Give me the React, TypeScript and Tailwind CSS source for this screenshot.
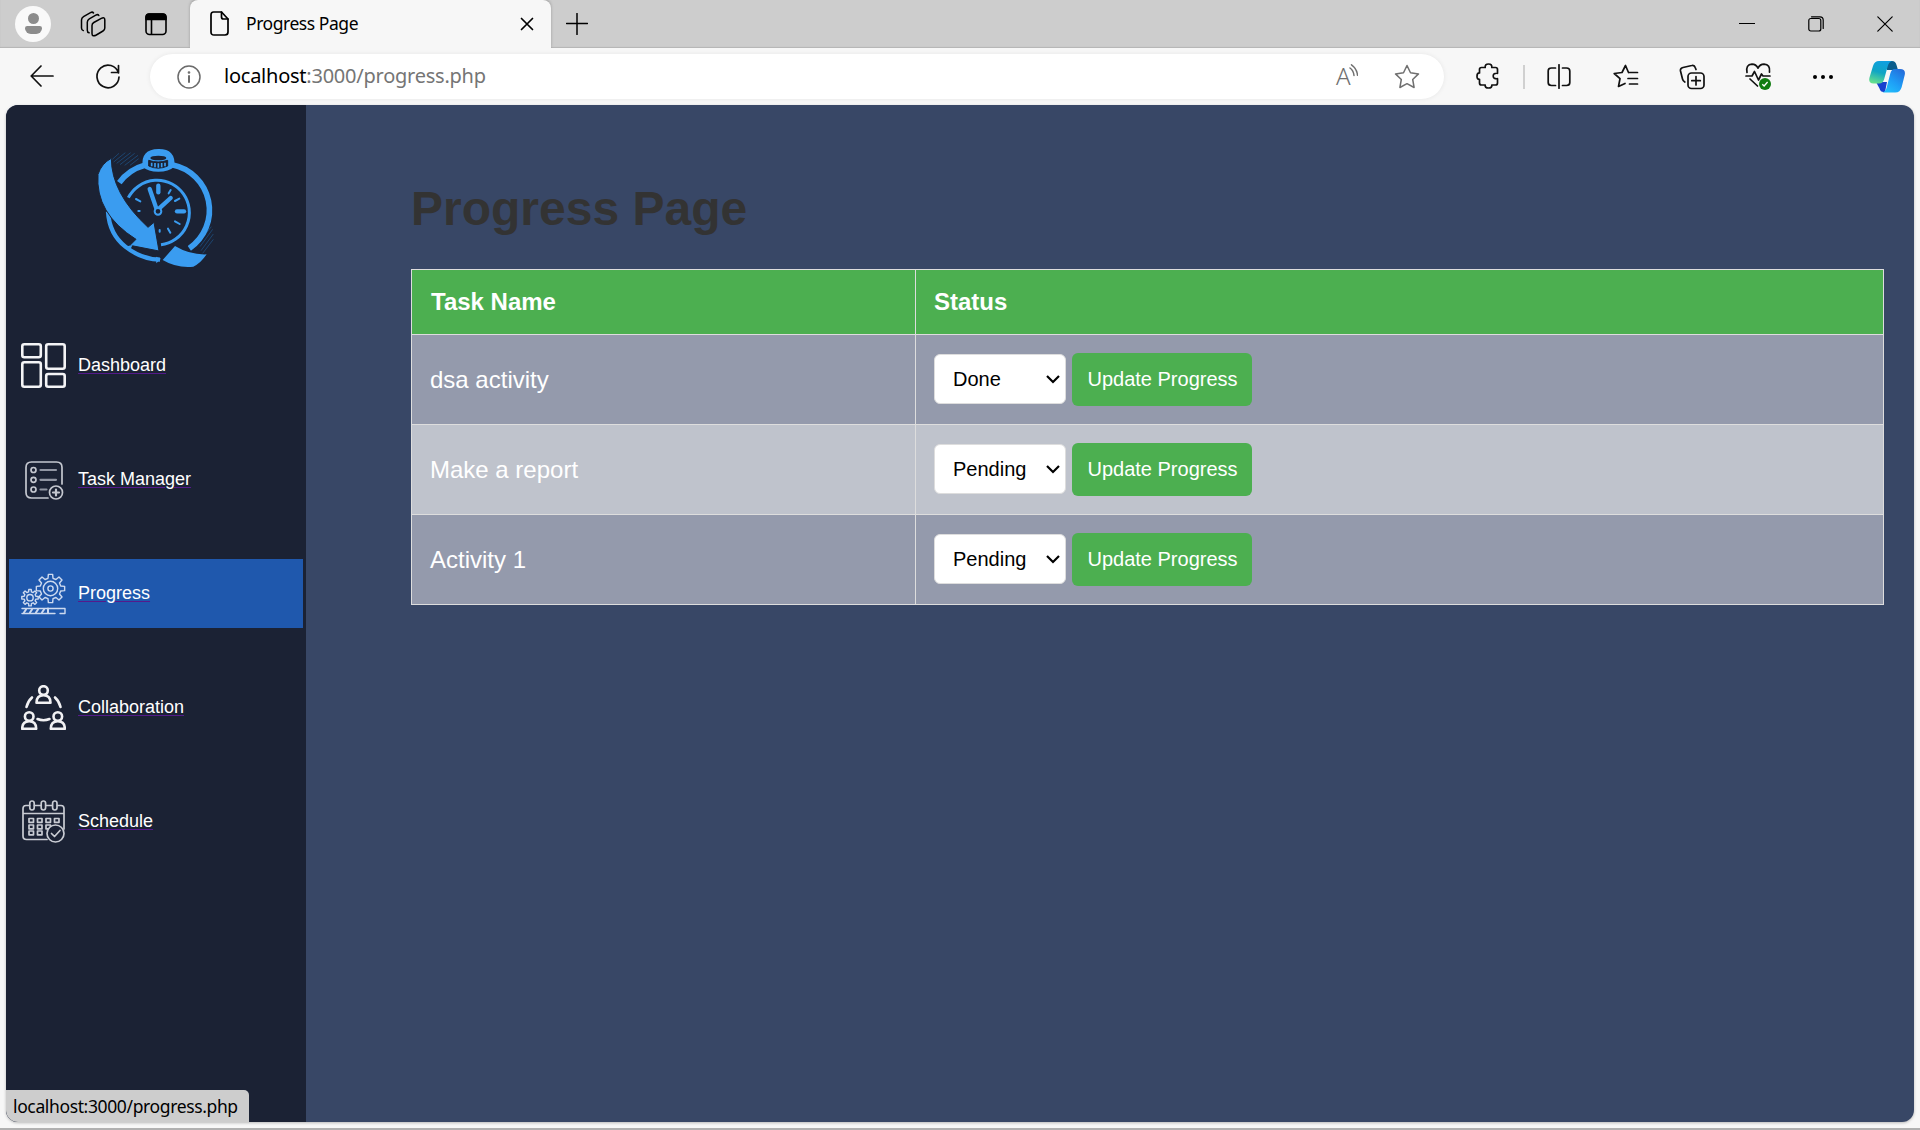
import React from "react";

type IconProps = { className?: string };

const Line = ({
  w,
  h,
  sw = 1.5,
  className = "",
  children,
}: {
  w: number;
  h: number;
  sw?: number;
  className?: string;
  children: React.ReactNode;
}) => (
  <svg
    width={w}
    height={h}
    viewBox={`0 0 ${w} ${h}`}
    fill="none"
    stroke="currentColor"
    strokeWidth={sw}
    strokeLinecap="round"
    strokeLinejoin="round"
    className={`block shrink-0 ${className}`}
  >
    {children}
  </svg>
);

/* ---------- browser chrome ---------- */

function TitleBar() {
  return (
    <div className="flex h-12 shrink-0 bg-[#cdcdcd] text-black shadow-[inset_0_-1px_1px_rgba(0,0,0,0.12)]">
      <div className="flex w-[190px] shrink-0 items-center pl-[15px]">
        <div className="flex h-9 w-9 flex-col items-center rounded-full bg-[#f9f9f9] pt-[7px]">
          <div className="h-[11px] w-[11px] rounded-full bg-[#8c8c8c]" />
          <div className="mt-[2px] h-[8px] w-[17px] rounded-t-[3px] rounded-b-[8px] bg-[#8c8c8c]" />
        </div>
        <Line w={26} h={26} className="ml-[29px]">
          <path d="M13.800 11.500l7.500-4.200q3.500-1.800 3.500 1.700v8q0 2-1.800 3l-6.700 4q-4.300 2.300-4.300-1.500v-8q0-2 1.800-3z" />
          <path d="M18.800 4.500q-.800-1.500-3-.400l-6.500 3.700q-2 1.200-2 3.400v8q0 2.300 1.800 2.600" />
          <path d="M13.500 2q-1-1.500-3-.400l-7 4q-2 1.200-2 3.400v8q0 2 1.800 2.600" />
        </Line>
        <Line w={22} h={23} className="ml-[39px]" sw={1.6}>
          <rect x="1" y="1" width="20" height="20.500" rx="3.500" />
          <path d="M1 6.500V4q0-3 3-3h14q3 0 3 3v2.500z" fill="currentColor" />
          <path d="M6.500 6v15" />
        </Line>
      </div>
      <div className="flex w-[361px] shrink-0 items-center rounded-t-lg bg-[#f7f7f7] pl-5 shadow-[0_-1px_3px_rgba(0,0,0,0.25)]">
        <Line w={19} h={25} sw={1.7} className="mb-[1px]">
          <path d="M3.500 1h8l6.500 7v13q0 3-3 3h-11q-3 0-3-3V4q0-3 2.500-3z" />
          <path d="M11.500 1v5q0 2 2 2h4.500" />
        </Line>
        <span className="mb-[2px] ml-[17px] flex-1 whitespace-nowrap text-[17.500px] tracking-[-0.450px]">
          Progress Page
        </span>
        <Line w={14} h={14} className="mr-[17px]" sw={1.700}>
          <path d="M1.500 1.500l11 11M12.500 1.500l-11 11" />
        </Line>
      </div>
      <Line w={22} h={22} className="mt-[13px] ml-[15px]">
        <path d="M11 .5v21M.5 10.500h21" />
      </Line>
      <div className="mb-[1px] ml-auto flex items-center pr-[27px]">
        <Line w={16} h={16} sw={1.200}>
          <path d="M.5 7.500h15" />
        </Line>
        <Line w={16} h={16} sw={1.200} className="ml-[53px]">
          <rect x=".8" y="2.500" width="12" height="12.500" rx="2" />
          <path d="M3.500 .8h8.500q3.200 0 3.200 3.200v8.500" />
        </Line>
        <Line w={16} h={16} sw={1.200} className="ml-[53px]">
          <path d="M.8 .8l14.400 14.400M15.200 .8L.8 15.200" />
        </Line>
      </div>
    </div>
  );
}

function Puzzle({ className }: IconProps) {
  return (
    <Line w={24} h={26} sw={1.700} className={className}>
      <path d="M5.500 4.500h3.700q-.400-3.500 3.300-3.500t3.300 3.500h3.700q2 0 2 2v3.800q-4.300-.300-4.300 2.700t4.300 2.700v4.300q0 2-2 2h-3.700q.400 3-3.300 3t-3.300-3H5.500q-2 0-2-2v-3.700Q1 16.500 1 13.200t2.500-3.300V6.500q0-2 2-2z" />
    </Line>
  );
}

function Copilot() {
  return (
    <svg width="36" height="33" viewBox="0 0 36 33" className="block shrink-0">
      <defs>
        <linearGradient id="cpA" x1="0.600" y1="0" x2="0.300" y2="1">
          <stop offset="0" stopColor="#0f9fe0" />
          <stop offset=".5" stopColor="#10a5c4" />
          <stop offset="1" stopColor="#66e08c" />
        </linearGradient>
        <linearGradient id="cpB" x1="1" y1="0" x2="0.300" y2="1">
          <stop offset="0" stopColor="#2565d6" />
          <stop offset=".6" stopColor="#1e9df6" />
          <stop offset="1" stopColor="#22bcfb" />
        </linearGradient>
      </defs>
      <path d="M18 1h5q3.500 0 4.500 4l1.500 5H18z" fill="#0b5d8c" />
      <path d="M7 22h11l-2 10h-1.500q-3 0-4-3.500z" fill="#1740cf" />
      <path d="M10 1h13q-3.200 1-4.200 5l-3.600 13q-1.200 4.500-5.200 4.500H4.500q-5.500 0-4-6L4 6q1.500-5 6-5z" fill="url(#cpA)" />
      <path d="M25.500 9h5.500q6 0 4.700 6l-3 12q-1.400 5.500-6.500 5.500H13.500q3.200-1 4.200-5l3.600-14q1.200-4.500 4.200-4.500z" fill="url(#cpB)" />
    </svg>
  );
}

function Toolbar() {
  return (
    <div className="flex h-[57px] shrink-0 items-center bg-[#f7f7f7] text-[#111]">
      <Line w={24} h={22} className="mb-[2px] ml-[30px]" sw={1.700}>
        <path d="M23 11H1.500M11 1L1.200 11l9.800 10" />
      </Line>
      <Line w={24} h={25} className="mb-[1px] ml-[42px]" sw={1.700}>
        <path d="M22.500 9A11 11.300 0 1 0 23 13M22.500 1.500V8.500H15.500" />
      </Line>
      <div className="ml-[30px] flex h-[45px] w-[1294px] items-center rounded-full bg-white pl-[27px] shadow-[0_0_5px_rgba(0,0,0,0.07)]">
        <Line w={24} h={24} className="text-[#6b6b6b]">
          <circle cx="12" cy="12" r="11" />
          <path d="M12 11v6" strokeWidth="2" />
          <circle cx="12" cy="7.500" r=".6" />
        </Line>
        <span className="mb-[1px] ml-[23px] whitespace-nowrap text-[20px] tracking-[-0.240px] text-black">
          localhost<span className="text-[#757575]">:3000/progress.php</span>
        </span>
        <div className="mb-[1px] ml-auto flex items-center pr-[24px] text-[#707070]">
          <div className="flex w-6 items-start">
            <span className="text-[24px] leading-6 font-light">A</span>
            <Line w={9} h={14} className="ml-[-2px]">
              <path d="M1 4q3.500 2.500 4 7.500M2.500 .8q5.500 4 6 10.500" />
            </Line>
          </div>
          <Line w={26} h={25} className="ml-[34px]">
            <path d="M13 1.500l3.500 7.300 8 1.100-5.800 5.600 1.400 8-7.100-3.800-7.100 3.800 1.400-8L1.500 9.900l8-1.100z" />
          </Line>
        </div>
      </div>
      <Puzzle className="mb-[1px] ml-[32px]" />
      <div className="ml-[23px] h-6 w-[2px] bg-[#d0d0d0]" />
      <Line w={24} h={26} className="ml-[22px]" sw={1.700}>
        <path d="M8.500 4H4.500Q1.200 4 1.200 7v11.500q0 3 3.300 3h4M15.500 4h4q3.300 0 3.300 3v11.500q0 3-3.300 3h-4M12 .8v23.400" />
      </Line>
      <Line w={26} h={24} className="mb-[1px] ml-[42px]" sw={1.700}>
        <path d="M15.500 8.500L12.500 1.500 9 8.500l-7.800 1 5.800 5.200L5.500 22.500l6.500-3M16.500 8.500h8M15 14.500h9.500M16.500 20h8" />
      </Line>
      <Line w={26} h={26} className="ml-[40px]" sw={1.700}>
        <rect x="9" y="9" width="16" height="15.500" rx="3.500" />
        <path d="M17 12.500v8.500M12.800 16.700h8.500M17 5.500l-.800-2q-.800-2.700-3.400-2L4 3.500Q1 4.300 1.500 7l2 8q.500 2 2.300 3" />
      </Line>
      <div className="relative mb-[1px] ml-[40px]">
        <Line w={26} h={26} sw={1.700}>
          <path d="M2 9.500Q.5 1.500 7 1.200q4 0 6 4 2-4 6-4 6.500.300 5.500 8M1 13h6l2.500-4.500 4 8.500 3-6 1.500 2h7M5 16l7.500 7" />
        </Line>
        <svg width="12" height="12" viewBox="0 0 12 12" className="absolute right-0 bottom-[-1px]">
          <circle cx="6" cy="6" r="6" fill="#107c10" />
          <path d="M3.300 6.300l1.800 1.700 3.500-4" stroke="white" strokeWidth="1.300" fill="none" />
        </svg>
      </div>
      <div className="ml-[42px] flex gap-[4px]">
        <i className="h-1 w-1 rounded-full bg-black" />
        <i className="h-1 w-1 rounded-full bg-black" />
        <i className="h-1 w-1 rounded-full bg-black" />
      </div>
      <div className="mr-[15px] ml-auto">
        <Copilot />
      </div>
    </div>
  );
}

/* ---------- sidebar ---------- */

function Logo() {
  return (
    <svg width="150" height="150" viewBox="0 0 450 450" className="block" fill="none" stroke="#3a9cf0">
      <g strokeWidth="3" stroke="#1d456f">
        <path d="M97 88l20-18M101 96l35-28M110 100l42-32M120 104l44-34M134 106l40-30M150 106l26-20M360 350l38-52M363 362l37-50M368 370l32-42M362 330l32-40" />
      </g>
      <path d="M118 158A140 140 0 0 1 194 106M276 104A139 139 0 0 1 328 355" strokeWidth="17" />
      <path d="M84 245Q88 312 136 350T240 389" strokeWidth="13" />
      <path d="M145 203A97 97 0 1 1 243 344" strokeWidth="9" />
      <path
        d="M192 108q-6-46 43-47t44 47q-14 13-44 13t-43-13z"
        fill="#3a9cf0"
        strokeWidth="8"
      />
      <ellipse cx="235" cy="84" rx="24" ry="7" fill="#1b2234" stroke="none" />
      <path d="M206 91q28 10 57 0v17q-28 13-57 0z" fill="#1b2234" stroke="#1b2234" strokeWidth="3" />
      <path d="M215 98v11M225 99v13M235 100v13M245 99v13M255 98v11" strokeWidth="5" />
      <g strokeLinecap="round">
        <path d="M235 167v20" strokeWidth="13" />
        <path d="M291 244h21" strokeWidth="13" />
        <path d="M266 190l6-10M285 213l13-7M285 274l14 8M264 296l7 12M168 207l13 7M175 243h4M239 300v5" strokeWidth="6" />
        <path d="M209 177l20 58M272 204l-35 32" strokeWidth="13" />
      </g>
      <circle cx="234" cy="244" r="10" fill="#1b2234" strokeWidth="6" />
      <path
        d="M94 85Q65 100 54 133Q45 250 168 328L150 346L237 363L222 277L204 292Q94 190 94 85z"
        fill="#3a9cf0"
        stroke="#1b2234"
        strokeWidth="3"
      />
      <path d="M132 352l26-8-6 12zM228 380l15 6-14 14z" fill="#3a9cf0" stroke="none" />
      <path d="M285 348L248 390Q290 415 340 410Q362 400 380 373Q330 375 285 348z" fill="#3a9cf0" stroke="none" />
    </svg>
  );
}

function DashboardIcon() {
  return (
    <Line w={45} h={45} sw={2.600} className="text-[#f4f4f6]">
      <rect x="1.300" y="1.300" width="18.500" height="13" rx="2" />
      <rect x="25.200" y="1.300" width="18.500" height="24.500" rx="2" />
      <rect x="1.300" y="19.300" width="18.500" height="24.400" rx="2" />
      <rect x="25.200" y="31" width="18.500" height="12.700" rx="2" />
    </Line>
  );
}

function TaskIcon() {
  return (
    <Line w={45} h={45} sw={1.700} className="text-[#c4c7cf]">
      <path d="M27 41H10.500q-5.500 0-5.500-5.500V10.500Q5 5 10.500 5h25q5.500 0 5.500 5.500V27" />
      <circle cx="12.500" cy="13" r="2.500" />
      <circle cx="12.500" cy="22.800" r="2.500" />
      <circle cx="12.500" cy="32.500" r="2.500" />
      <path d="M19.500 13h15.500M19.500 22.800h15.500M19.500 32.500h6" strokeWidth="2.200" stroke="#9196a3" />
      <circle cx="35" cy="35.500" r="6.500" />
      <path d="M35 32.500v6M32 35.500h6" strokeWidth="2.200" />
    </Line>
  );
}

/** Outline of a cog: alternates between tooth and root radius around the centre. */
function cog(cx: number, cy: number, outer: number, inner: number) {
  const points: string[] = [];
  for (let t = 0; t < 8; t++) {
    const a = (t * Math.PI) / 4;
    [
      [inner, -0.24],
      [outer, -0.15],
      [outer, 0.15],
      [inner, 0.24],
    ].forEach(([r, d]) => points.push(`${(cx + r * Math.cos(a + d)).toFixed(2)} ${(cy + r * Math.sin(a + d)).toFixed(2)}`));
  }
  return `M${points.join("L")}z`;
}

function ProgressIcon() {
  return (
    <Line w={45} h={45} sw={1.400} className="text-[#cddaf0]">
      <path d={cog(29.500, 15.500, 14.300, 10.500)} />
      <circle cx="29.500" cy="15.500" r="7.200" />
      <circle cx="29.500" cy="15.500" r="2.600" />
      <path d={cog(9, 24.700, 8.300, 6)} fill="#1f58ad" />
      <circle cx="9" cy="24.700" r="3.200" />
      <path d="M1 35.500h43v5h-5M34 40.500H1z" />
      <path d="M3 39.500l2-3M9 39.500l2-3M15 39.500l2-3M21 39.500l2-3M27 35.500v4.500" strokeWidth="2" />
    </Line>
  );
}

function Person({ x, y }: { x: number; y: number }) {
  return (
    <g transform={`translate(${x} ${y})`}>
      <circle cx="7.500" cy="5.500" r="4.300" />
      <path d="M.5 17.800q0-7.500 7-7.500t7 7.500z" />
    </g>
  );
}

function CollaborationIcon() {
  return (
    <Line w={45} h={45} sw={2.600} className="text-[#f1f1f3]">
      <Person x={15} y={0} />
      <Person x={0.700} y={26} />
      <Person x={29.300} y={26} />
      <path d="M11 12.500Q7 16 5.500 22M34 12.500Q38 16 39.500 22M16.500 34q6 2.500 12 0" />
    </Line>
  );
}

function ScheduleIcon() {
  const cells = [
    [8, 19.500], [16.500, 19.500], [25, 19.500], [33.500, 19.500],
    [8, 26], [16.500, 26], [25, 26],
    [8, 32], [16.500, 32],
  ];
  return (
    <Line w={45} h={45} sw={1.700} className="text-[#c9ccd3]">
      <path d="M8.500 6.500H5Q2 6.500 2 9.500V37q0 3.500 3.500 3.500H26M13.500 6.500h6M25 6.500h6M36.500 6.500h3.500q3 0 3 3V30M2 14.500h41" />
      <rect x="8.800" y="2" width="4.400" height="9" rx="2.200" />
      <rect x="20.200" y="2" width="4.400" height="9" rx="2.200" />
      <rect x="31.600" y="2" width="4.400" height="9" rx="2.200" />
      {cells.map(([x, y]) => (
        <rect key={`${x}-${y}`} x={x} y={y} width="4.500" height="3.800" />
      ))}
      <circle cx="34.500" cy="34.500" r="8.500" fill="#1b2234" />
      <path d="M30.500 34.500l3 3 5.500-6" />
    </Line>
  );
}

const navItems = [
  { label: "Dashboard", icon: <DashboardIcon /> },
  { label: "Task Manager", icon: <TaskIcon /> },
  { label: "Progress", icon: <div className="pt-[3px]"><ProgressIcon /></div>, active: true },
  { label: "Collaboration", icon: <CollaborationIcon /> },
  { label: "Schedule", icon: <ScheduleIcon /> },
];

function Sidebar() {
  return (
    <aside className="flex w-[300px] shrink-0 flex-col bg-[#1b2234] px-[3px] pt-[25px]">
      <div className="pl-[71px]">
        <Logo />
      </div>
      <nav className="mt-[51px] flex flex-col gap-[45px]">
        {navItems.map((item) => (
          <a
            key={item.label}
            className={
              item.active
                ? "flex h-[69px] items-center bg-[#1f58ad] pl-3"
                : "flex h-[69px] items-center pl-3"
            }
          >
            {item.icon}
            <span className="mb-[2px] ml-3 text-[18px] leading-5 text-white underline decoration-[#551a8b] decoration-1 underline-offset-[2px]">
              {item.label}
            </span>
          </a>
        ))}
      </nav>
    </aside>
  );
}

/* ---------- page content ---------- */

const tasks = [
  { name: "dsa activity", status: "Done" },
  { name: "Make a report", status: "Pending" },
  { name: "Activity 1", status: "Pending" },
];

function StatusSelect({ value }: { value: string }) {
  return (
    <div className="relative mb-[2px] h-[50px] w-[132px]">
      <select
        defaultValue={value}
        className="h-full w-full appearance-none rounded-[6px] border border-[#ddd] bg-white pl-[18px] text-[20px] text-black"
      >
        <option>Pending</option>
        <option>Done</option>
      </select>
      <svg
        width="14"
        height="9"
        viewBox="0 0 14 9"
        fill="none"
        stroke="black"
        strokeWidth="2.200"
        className="pointer-events-none absolute top-[21px] right-[6px]"
      >
        <path d="M1 1l6 6 6-6" />
      </svg>
    </div>
  );
}

function TaskTable() {
  return (
    <table className="mt-[31px] w-[1473px] table-fixed border-collapse text-[24px] text-white">
      <colgroup>
        <col className="w-[504px]" />
        <col />
      </colgroup>
      <thead>
        <tr className="h-[65px] bg-[#4caf50] text-left">
          <th className="border border-[#ddd] px-[19px] py-0 font-bold">Task Name</th>
          <th className="border border-[#ddd] px-[18px] py-0 font-bold">Status</th>
        </tr>
      </thead>
      <tbody>
        {tasks.map((task, i) => (
          <tr key={task.name} className={i % 2 ? "h-[90px] bg-[#bfc3cc]" : "h-[90px] bg-[#949aac]"}>
            <td className="border border-[#ddd] px-[18px] py-0">{task.name}</td>
            <td className="border border-[#ddd] px-[18px] py-0">
              <div className="flex items-center gap-[6px]">
                <StatusSelect value={task.status} />
                <button className="h-[53px] w-[180px] rounded-[6px] bg-[#4caf50] pb-[2px] pl-[1px] text-[20px] whitespace-nowrap text-white">
                  Update Progress
                </button>
              </div>
            </td>
          </tr>
        ))}
      </tbody>
    </table>
  );
}

export default function App() {
  return (
    <div className="flex h-[1130px] w-[1920px] flex-col overflow-hidden border-b-2 border-[#b0b0b0] bg-[#f7f7f7] font-['Noto_Sans',sans-serif]">
      <TitleBar />
      <Toolbar />
      <div className="relative mx-[6px] flex h-[1017px] overflow-hidden rounded-xl bg-[#384766] font-['Liberation_Sans',Arial,sans-serif] shadow-[0_1px_3px_rgba(0,0,0,0.25)]">
        <Sidebar />
        <main className="flex-1 pt-[75px] pl-[105px]">
          <h1 className="text-[48px] leading-[58px] font-bold text-[#333]">Progress Page</h1>
          <TaskTable />
        </main>
        <div className="absolute bottom-0 left-0 flex h-[32px] w-[243px] items-center rounded-tr-[5px] bg-[#cdcdcd] pl-[7px] font-['Noto_Sans',sans-serif] text-[17.500px] tracking-[-0.370px] whitespace-nowrap text-black">
          localhost:3000/progress.php
        </div>
      </div>
    </div>
  );
}
